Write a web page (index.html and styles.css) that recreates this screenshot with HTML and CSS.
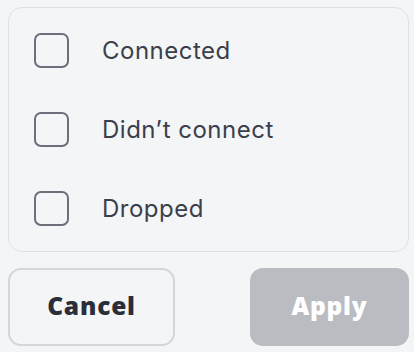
FILE: index.html
```html
<!DOCTYPE html>
<html lang="en">
<head>
<meta charset="utf-8">
<title>Filter</title>
<link rel="stylesheet" href="styles.css">
</head>
<body>
<div class="panel">
  <div class="card">
    <label class="row"><span class="box"></span><span class="label">Connected</span></label>
    <label class="row"><span class="box"></span><span class="label">Didn’t connect</span></label>
    <label class="row"><span class="box"></span><span class="label">Dropped</span></label>
  </div>
  <div class="actions">
    <button class="btn cancel">Cancel</button>
    <button class="btn apply">Apply</button>
  </div>
</div>
</body>
</html>
```

FILE: styles.css
```css
html, body {
  margin: 0;
  padding: 0;
  background: #f4f5f7;
}
.panel {
  padding: 7px 5px 0 8px;
  display: flex;
  flex-direction: column;
  gap: 16px;
}
.card {
  border: 1px solid #dfe0e3;
  border-radius: 14px;
  padding: 3px 0;
  display: flex;
  flex-direction: column;
}
.row {
  height: 79px;
  display: flex;
  align-items: center;
  padding-left: 25px;
  gap: 33px;
}
.box {
  width: 31px;
  height: 31px;
  border: 2.5px solid #6b6f7b;
  border-radius: 7px;
  box-sizing: content-box;
  flex: none;
}
.label {
  font-family: Inter, "Noto Sans", sans-serif;
  font-size: 24px;
  letter-spacing: 0.5px;
  color: #3a3f4b;
}
.actions {
  display: flex;
  justify-content: space-between;
}
.btn {
  height: 78px;
  border-radius: 13px;
  font-family: "Open Sans", sans-serif;
  font-weight: 800;
  font-size: 24.5px;
  letter-spacing: 0.8px;
  padding: 0 0 3px;
  cursor: pointer;
}
.cancel {
  width: 167px;
  background: #f4f5f7;
  border: 2px solid #d5d6da;
  color: #2a2e39;
}
.apply {
  width: 159px;
  background: #b9bcc0;
  border: none;
  color: #ffffff;
}
```
